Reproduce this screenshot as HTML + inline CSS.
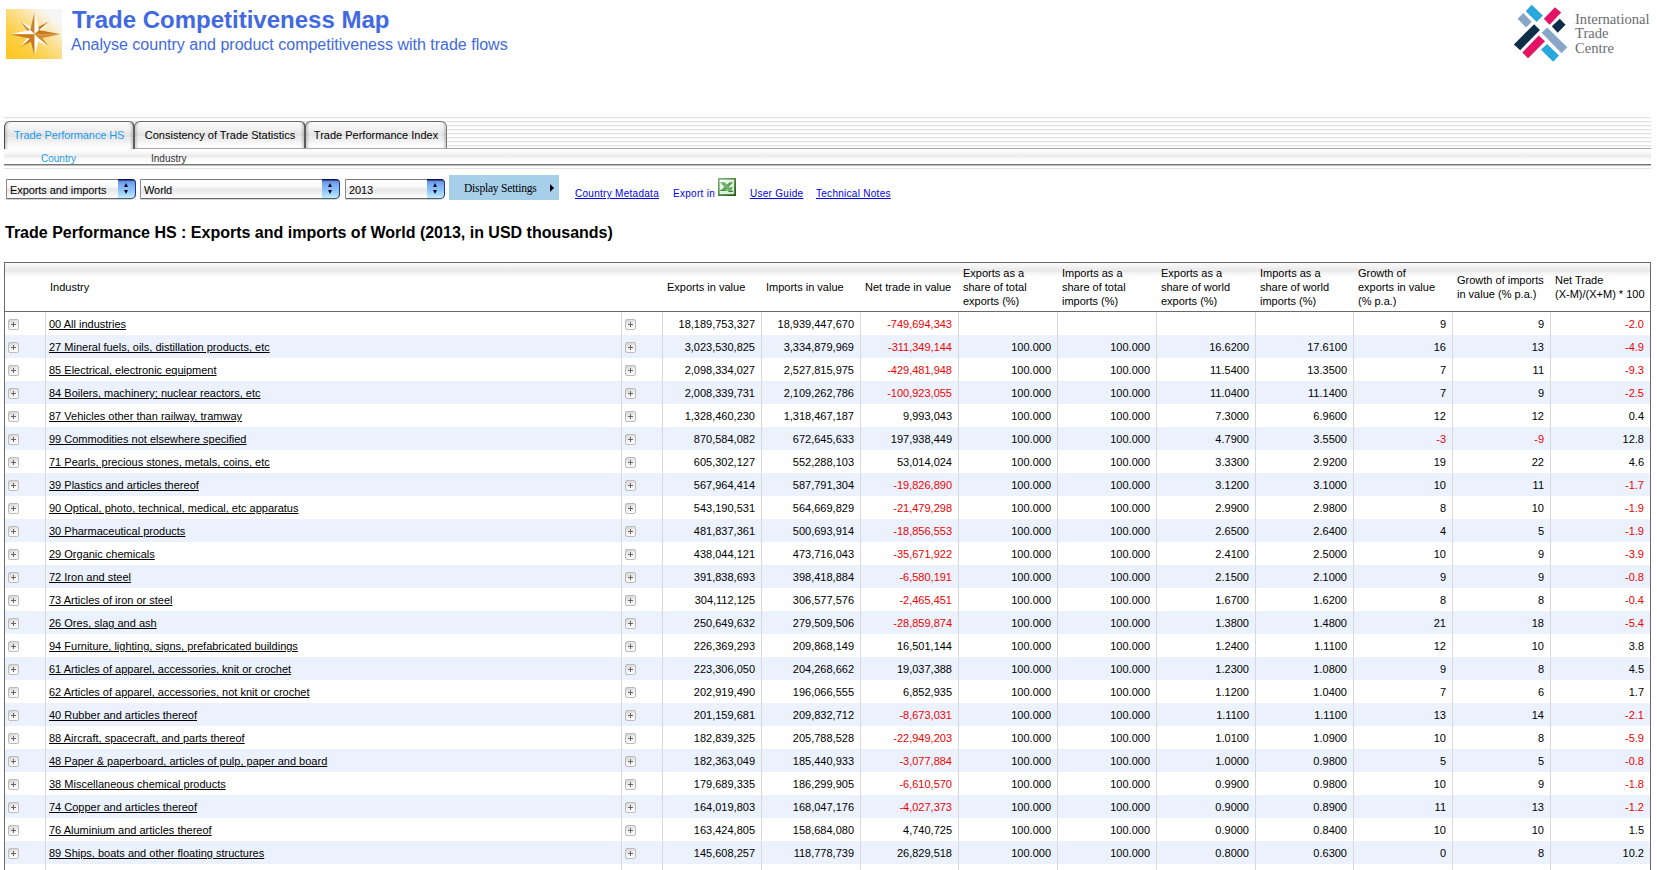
<!DOCTYPE html>
<html lang="en">
<head>
<meta charset="utf-8">
<title>Trade Competitiveness Map</title>
<style>
html,body{margin:0;padding:0;background:#fff;}
body{width:1657px;height:870px;overflow:hidden;position:relative;font-family:"Liberation Sans",Arial,sans-serif;font-size:11px;color:#000;}
.abs{position:absolute;}
#logo{left:6px;top:9px;width:56px;height:50px;}
#title{left:72px;top:6px;font-size:24px;font-weight:bold;color:#4169e1;white-space:nowrap;line-height:28px;}
#subtitle{left:71px;top:35px;font-size:16px;color:#4169e1;white-space:nowrap;line-height:20px;}
#itc{left:1497px;top:0;width:160px;height:80px;}
.itct{position:absolute;left:1575px;font-family:"Liberation Serif","Times New Roman",serif;font-size:14.6px;line-height:16px;color:#6b6d70;white-space:nowrap;}
#stripes{left:4px;top:117px;width:1647px;height:31px;background:repeating-linear-gradient(to bottom,#e3e3e3 0,#e3e3e3 1px,#f4f4f4 1px,#f4f4f4 2px,#fff 2px,#fff 4px);}
#tabline{left:4px;top:148px;width:1647px;height:1px;background:#a8a8a8;}
#subbar{left:4px;top:149px;width:1647px;height:15px;background:linear-gradient(to bottom,#fff 0,#fafafa 20%,#ebebeb 50%,#f4f4f4 56%,#fff 80%,#fff 100%);}
#subline{left:4px;top:164px;width:1647px;height:2px;background:linear-gradient(to bottom,#777 0,#777 1px,#bdbdbd 1px,#bdbdbd 2px);}
#subline2{left:4px;top:168px;width:1647px;height:1px;background:#e4e4e4;}
.tab{position:absolute;top:121px;height:27px;box-sizing:border-box;border:1px solid #6a6a6a;border-right:2px solid #5c5c5c;border-bottom:none;border-radius:6px 6px 0 0;background:linear-gradient(to bottom,#fcfcfc 0,#f2f2f2 25%,#e3e3e3 50%,#e0e0e0 54%,#f2f2f2 57%,#eaeaea 62%,#fafafa 85%,#fff 100%);text-align:center;line-height:26px;font-size:11px;white-space:nowrap;box-shadow:inset 3px 0 2px -1px rgba(0,0,0,.16),inset -3px 0 2px -1px rgba(0,0,0,.16),inset 0 1px 0 #fff;}
.tab.sel{height:28px;color:#1e9bef;border-left-color:#484848;letter-spacing:-0.1px;z-index:3;}
.sub{position:absolute;top:153px;font-size:10px;line-height:12px;white-space:nowrap;color:#333;}
.sel2{position:absolute;top:179px;height:20px;box-sizing:border-box;border:1px solid #8c8c8c;border-top-color:#7a7a7a;border-bottom-color:#666;border-radius:0 5px 5px 0;background:linear-gradient(to bottom,#fff 0,#fafafa 35%,#e6e6e6 55%,#f1f1f1 75%,#fff 100%);font-size:11px;letter-spacing:-0.08px;line-height:20px;padding-left:3px;white-space:nowrap;box-shadow:0 1px 0 #d4d4d4;}
.sel2 .cap{position:absolute;right:-1px;top:-1px;width:18px;height:20px;box-sizing:border-box;border-top:1px solid #0c1556;border-right:1px solid #22357c;border-bottom:1px solid #466068;border-radius:0 4px 5px 0;background:linear-gradient(to bottom,#1d2f80 0,#6a98e6 9%,#7fb0f1 30%,#8cc2f6 55%,#a8d8fa 80%,#c6eefd 100%);}
.sel2 .cap:before{content:"";position:absolute;left:6px;top:3px;border:2.4px solid transparent;border-top:none;border-bottom:4px solid #06082a;}
.sel2 .cap:after{content:"";position:absolute;left:6px;top:10px;border:2.4px solid transparent;border-bottom:none;border-top:4px solid #06082a;}
#disp{left:449px;top:175px;width:110px;height:25px;background:#a8cfe9;font-family:"Liberation Serif","Times New Roman",serif;font-size:11.5px;letter-spacing:-0.2px;line-height:25px;white-space:nowrap;}
#disp span{position:absolute;left:15px;top:1px;}
#disp:after{content:"";position:absolute;left:101px;top:9.3px;border:4px solid transparent;border-right:none;border-left:4.6px solid #000;}
.lnk{position:absolute;top:187px;font-size:10px;letter-spacing:0.28px;line-height:13px;color:#0000f0;white-space:nowrap;}
.lnk.u{text-decoration:underline;}
#xl{left:718px;top:178px;width:18px;height:18px;}
#h1{left:5px;top:223px;font-size:16px;font-weight:bold;line-height:20px;white-space:nowrap;color:#000;}
#grid{left:4px;top:262px;width:1647px;border-collapse:separate;border-spacing:0;table-layout:fixed;border:1px solid #6a6a6a;border-bottom:none;font-size:11px;}
#grid th{height:49px;padding:0 0 0 5px;text-align:left;font-weight:normal;vertical-align:middle;line-height:14px;border-bottom:1px solid #6a6a6a;background:linear-gradient(to bottom,#fbfbfb 0,#f1f1f1 4px,#e8e8e8 8px,#f2f2f2 9.5px,#fff 14px);box-sizing:border-box;}
#grid td{height:23px;padding:2px 0 0 0;box-sizing:border-box;white-space:nowrap;overflow:hidden;line-height:21px;border-left:1px solid #d9d9d9;}
#grid td.pl{border-left:none;}
#grid tr.alt td{background:#ecf2fd;}
#grid td.n{text-align:right;padding-right:6px;}
#grid td.neg{color:#f00000;}
#grid td.nm{padding-left:3px;}
#grid td.nm a{text-decoration:underline;color:#000;}
.plus{display:block;width:9px;height:9px;border:1px solid #bcbcbc;border-radius:2px;margin-left:3px;position:relative;background:linear-gradient(160deg,#d2d2d2 0,#f0f0f0 50%,#fff 100%);}
.plus:before{content:"";position:absolute;left:2px;top:4px;width:5px;height:1px;background:#666;}
.plus:after{content:"";position:absolute;left:4px;top:2px;width:1px;height:5px;background:#666;}

</style>
</head>
<body>
<svg id="logo" class="abs" viewBox="0 0 56 50">
<defs>
<linearGradient id="lg" x1="0" y1="1" x2="1" y2="0">
<stop offset="0" stop-color="#fdc41a"/><stop offset="0.3" stop-color="#fcce42"/><stop offset="0.6" stop-color="#fbe29a"/><stop offset="0.78" stop-color="#f8f2e4"/><stop offset="0.86" stop-color="#f5f7f6"/><stop offset="1" stop-color="#f4f7f7"/>
</linearGradient>
</defs>
<rect width="56" height="50" fill="url(#lg)"/>
<g transform="translate(28.6,25.3)">
<polygon points="0,0 -14,-12.8 -3.2,-7" fill="#fff"/><polygon points="0,0 -14,-12.8 -7,-3.2" fill="#cc8024"/>
<polygon points="0,0 14.6,-13 3.2,-7" fill="#c97a1e"/><polygon points="0,0 14.6,-13 7,-3.2" fill="#fff"/>
<polygon points="0,0 14.4,12.4 3.2,7" fill="#fff"/><polygon points="0,0 14.4,12.4 7,3.2" fill="#c97a1e"/>
<polygon points="0,0 -14,12.6 -3.2,7" fill="#c97a1e"/><polygon points="0,0 -14,12.6 -7,3.2" fill="#fff"/>
<polygon points="0,-22.3 -4.4,-4.4 0,0" fill="#cb8127"/><polygon points="0,-22.3 4.4,-4.4 0,0" fill="#fff"/>
<polygon points="0,22 -4.4,4.4 0,0" fill="#c97a1e"/><polygon points="0,22 4.4,4.4 0,0" fill="#fff"/>
<polygon points="-24.6,0 -4.4,-4.4 0,0" fill="#fff"/><polygon points="-24.6,0 -4.4,4.4 0,0" fill="#c97a1e"/>
<polygon points="25.8,0 4.4,-4.4 0,0" fill="#c97a1e"/><polygon points="25.8,0 4.4,4.4 0,0" fill="#d28d35"/>
</g>
</svg>
<div id="title" class="abs">Trade Competitiveness Map</div>
<div id="subtitle" class="abs">Analyse country and product competitiveness with trade flows</div>
<svg id="itc" class="abs" viewBox="0 0 1657 828">
<polygon points="358,50 475,160 410,228 298,115" fill="#2aa7dc"/>
<polygon points="600,75 665,130 545,255 485,195" fill="#e31463"/>
<polygon points="272,135 360,225 300,285 213,195" fill="#88a7c8"/>
<polygon points="650,195 710,255 628,340 568,272" fill="#0d2d48"/>
<polygon points="385,250 445,310 240,520 175,460" fill="#0d2d48"/>
<polygon points="520,285 728,490 668,550 462,340" fill="#88a7c8"/>
<polygon points="432,368 497,428 322,603 262,543" fill="#e31463"/>
<polygon points="518,455 642,575 582,640 455,515" fill="#2aa7dc"/>
</svg>
<div class="itct" style="top:11px">International</div><div class="itct" style="top:25px">Trade</div><div class="itct" style="top:40px">Centre</div>
<div id="stripes" class="abs"></div>
<div id="tabline" class="abs"></div>
<div id="subbar" class="abs"></div>
<div id="subline" class="abs"></div>
<div id="subline2" class="abs"></div>
<div class="tab sel" style="left:4px;width:131px;">Trade Performance HS</div>
<div class="tab" style="left:134px;width:172px;z-index:2;padding-left:1px;">Consistency of Trade Statistics</div>
<div class="tab" style="left:305px;width:142px;z-index:1;border-right:1px solid #777;">Trade Performance Index</div>
<div class="sub" style="left:41px;color:#1c9be6;">Country</div>
<div class="sub" style="left:151px;">Industry</div>
<div class="sel2" style="left:6px;width:130px;">Exports and imports<span class="cap"></span></div>
<div class="sel2" style="left:140px;width:200px;">World<span class="cap"></span></div>
<div class="sel2" style="left:345px;width:100px;">2013<span class="cap"></span></div>
<div id="disp" class="abs"><span>Display Settings</span></div>
<div class="lnk u" style="left:575px;">Country Metadata</div>
<div class="lnk" style="left:673px;">Export in</div>
<svg id="xl" class="abs" viewBox="0 0 18 18">
<defs><linearGradient id="xg" x1="0" y1="0" x2="1" y2="1"><stop offset="0" stop-color="#86b47e"/><stop offset="0.5" stop-color="#4c8a3f"/><stop offset="1" stop-color="#245216"/></linearGradient>
<linearGradient id="xf" x1="0" y1="0" x2="1" y2="1"><stop offset="0" stop-color="#f4faf3"/><stop offset="1" stop-color="#d4e6d0"/></linearGradient></defs>
<rect x="0" y="0" width="18" height="18" fill="url(#xg)"/>
<rect x="1.6" y="1.6" width="14.6" height="14.6" fill="url(#xf)"/>
<polygon points="12.2,9.4 15.4,9.4 12.4,11.4 15.6,14 10.8,14 9.6,12.6" fill="#3c8438"/>
<polygon points="11.6,4.2 15.2,4.2 6.8,13 2,13" fill="#58a354"/>
<polygon points="2,4.2 6.8,4.2 14.8,13 10.2,13" fill="#6db368"/>
<polygon points="2,12.2 8.6,12.2 9.2,13 2,13" fill="#3f8a3a"/>
</svg>
<div class="lnk u" style="left:750px;">User Guide</div>
<div class="lnk u" style="left:816px;">Technical Notes</div>
<div id="h1" class="abs">Trade Performance HS : Exports and imports of World (2013, in USD thousands)</div>
<table id="grid" class="abs">
<colgroup><col style="width:40px"><col style="width:576px"><col style="width:41px"><col style="width:99px"><col style="width:99px"><col style="width:98px"><col style="width:99px"><col style="width:99px"><col style="width:99px"><col style="width:98px"><col style="width:99px"><col style="width:98px"><col></colgroup>
<thead><tr>
<th></th><th>Industry</th><th></th>
<th>Exports in value</th><th>Imports in value</th><th>Net trade in value</th>
<th>Exports as a<br>share of total<br>exports (%)</th><th>Imports as a<br>share of total<br>imports (%)</th>
<th>Exports as a<br>share of world<br>exports (%)</th><th>Imports as a<br>share of world<br>imports (%)</th>
<th>Growth of<br>exports in value<br>(% p.a.)</th><th>Growth of imports<br>in value (% p.a.)</th><th>Net Trade<br>(X-M)/(X+M) * 100</th>
</tr></thead>
<tbody>
<tr><td class="pl"><i class="plus"></i></td><td class="nm"><a>00 All industries</a></td><td class="pl2"><i class="plus"></i></td><td class="n">18,189,753,327</td><td class="n">18,939,447,670</td><td class="n neg">-749,694,343</td><td class="n"></td><td class="n"></td><td class="n"></td><td class="n"></td><td class="n">9</td><td class="n">9</td><td class="n neg">-2.0</td></tr>
<tr class="alt"><td class="pl"><i class="plus"></i></td><td class="nm"><a>27 Mineral fuels, oils, distillation products, etc</a></td><td class="pl2"><i class="plus"></i></td><td class="n">3,023,530,825</td><td class="n">3,334,879,969</td><td class="n neg">-311,349,144</td><td class="n">100.000</td><td class="n">100.000</td><td class="n">16.6200</td><td class="n">17.6100</td><td class="n">16</td><td class="n">13</td><td class="n neg">-4.9</td></tr>
<tr><td class="pl"><i class="plus"></i></td><td class="nm"><a>85 Electrical, electronic equipment</a></td><td class="pl2"><i class="plus"></i></td><td class="n">2,098,334,027</td><td class="n">2,527,815,975</td><td class="n neg">-429,481,948</td><td class="n">100.000</td><td class="n">100.000</td><td class="n">11.5400</td><td class="n">13.3500</td><td class="n">7</td><td class="n">11</td><td class="n neg">-9.3</td></tr>
<tr class="alt"><td class="pl"><i class="plus"></i></td><td class="nm"><a>84 Boilers, machinery; nuclear reactors, etc</a></td><td class="pl2"><i class="plus"></i></td><td class="n">2,008,339,731</td><td class="n">2,109,262,786</td><td class="n neg">-100,923,055</td><td class="n">100.000</td><td class="n">100.000</td><td class="n">11.0400</td><td class="n">11.1400</td><td class="n">7</td><td class="n">9</td><td class="n neg">-2.5</td></tr>
<tr><td class="pl"><i class="plus"></i></td><td class="nm"><a>87 Vehicles other than railway, tramway</a></td><td class="pl2"><i class="plus"></i></td><td class="n">1,328,460,230</td><td class="n">1,318,467,187</td><td class="n">9,993,043</td><td class="n">100.000</td><td class="n">100.000</td><td class="n">7.3000</td><td class="n">6.9600</td><td class="n">12</td><td class="n">12</td><td class="n">0.4</td></tr>
<tr class="alt"><td class="pl"><i class="plus"></i></td><td class="nm"><a>99 Commodities not elsewhere specified</a></td><td class="pl2"><i class="plus"></i></td><td class="n">870,584,082</td><td class="n">672,645,633</td><td class="n">197,938,449</td><td class="n">100.000</td><td class="n">100.000</td><td class="n">4.7900</td><td class="n">3.5500</td><td class="n neg">-3</td><td class="n neg">-9</td><td class="n">12.8</td></tr>
<tr><td class="pl"><i class="plus"></i></td><td class="nm"><a>71 Pearls, precious stones, metals, coins, etc</a></td><td class="pl2"><i class="plus"></i></td><td class="n">605,302,127</td><td class="n">552,288,103</td><td class="n">53,014,024</td><td class="n">100.000</td><td class="n">100.000</td><td class="n">3.3300</td><td class="n">2.9200</td><td class="n">19</td><td class="n">22</td><td class="n">4.6</td></tr>
<tr class="alt"><td class="pl"><i class="plus"></i></td><td class="nm"><a>39 Plastics and articles thereof</a></td><td class="pl2"><i class="plus"></i></td><td class="n">567,964,414</td><td class="n">587,791,304</td><td class="n neg">-19,826,890</td><td class="n">100.000</td><td class="n">100.000</td><td class="n">3.1200</td><td class="n">3.1000</td><td class="n">10</td><td class="n">11</td><td class="n neg">-1.7</td></tr>
<tr><td class="pl"><i class="plus"></i></td><td class="nm"><a>90 Optical, photo, technical, medical, etc apparatus</a></td><td class="pl2"><i class="plus"></i></td><td class="n">543,190,531</td><td class="n">564,669,829</td><td class="n neg">-21,479,298</td><td class="n">100.000</td><td class="n">100.000</td><td class="n">2.9900</td><td class="n">2.9800</td><td class="n">8</td><td class="n">10</td><td class="n neg">-1.9</td></tr>
<tr class="alt"><td class="pl"><i class="plus"></i></td><td class="nm"><a>30 Pharmaceutical products</a></td><td class="pl2"><i class="plus"></i></td><td class="n">481,837,361</td><td class="n">500,693,914</td><td class="n neg">-18,856,553</td><td class="n">100.000</td><td class="n">100.000</td><td class="n">2.6500</td><td class="n">2.6400</td><td class="n">4</td><td class="n">5</td><td class="n neg">-1.9</td></tr>
<tr><td class="pl"><i class="plus"></i></td><td class="nm"><a>29 Organic chemicals</a></td><td class="pl2"><i class="plus"></i></td><td class="n">438,044,121</td><td class="n">473,716,043</td><td class="n neg">-35,671,922</td><td class="n">100.000</td><td class="n">100.000</td><td class="n">2.4100</td><td class="n">2.5000</td><td class="n">10</td><td class="n">9</td><td class="n neg">-3.9</td></tr>
<tr class="alt"><td class="pl"><i class="plus"></i></td><td class="nm"><a>72 Iron and steel</a></td><td class="pl2"><i class="plus"></i></td><td class="n">391,838,693</td><td class="n">398,418,884</td><td class="n neg">-6,580,191</td><td class="n">100.000</td><td class="n">100.000</td><td class="n">2.1500</td><td class="n">2.1000</td><td class="n">9</td><td class="n">9</td><td class="n neg">-0.8</td></tr>
<tr><td class="pl"><i class="plus"></i></td><td class="nm"><a>73 Articles of iron or steel</a></td><td class="pl2"><i class="plus"></i></td><td class="n">304,112,125</td><td class="n">306,577,576</td><td class="n neg">-2,465,451</td><td class="n">100.000</td><td class="n">100.000</td><td class="n">1.6700</td><td class="n">1.6200</td><td class="n">8</td><td class="n">8</td><td class="n neg">-0.4</td></tr>
<tr class="alt"><td class="pl"><i class="plus"></i></td><td class="nm"><a>26 Ores, slag and ash</a></td><td class="pl2"><i class="plus"></i></td><td class="n">250,649,632</td><td class="n">279,509,506</td><td class="n neg">-28,859,874</td><td class="n">100.000</td><td class="n">100.000</td><td class="n">1.3800</td><td class="n">1.4800</td><td class="n">21</td><td class="n">18</td><td class="n neg">-5.4</td></tr>
<tr><td class="pl"><i class="plus"></i></td><td class="nm"><a>94 Furniture, lighting, signs, prefabricated buildings</a></td><td class="pl2"><i class="plus"></i></td><td class="n">226,369,293</td><td class="n">209,868,149</td><td class="n">16,501,144</td><td class="n">100.000</td><td class="n">100.000</td><td class="n">1.2400</td><td class="n">1.1100</td><td class="n">12</td><td class="n">10</td><td class="n">3.8</td></tr>
<tr class="alt"><td class="pl"><i class="plus"></i></td><td class="nm"><a>61 Articles of apparel, accessories, knit or crochet</a></td><td class="pl2"><i class="plus"></i></td><td class="n">223,306,050</td><td class="n">204,268,662</td><td class="n">19,037,388</td><td class="n">100.000</td><td class="n">100.000</td><td class="n">1.2300</td><td class="n">1.0800</td><td class="n">9</td><td class="n">8</td><td class="n">4.5</td></tr>
<tr><td class="pl"><i class="plus"></i></td><td class="nm"><a>62 Articles of apparel, accessories, not knit or crochet</a></td><td class="pl2"><i class="plus"></i></td><td class="n">202,919,490</td><td class="n">196,066,555</td><td class="n">6,852,935</td><td class="n">100.000</td><td class="n">100.000</td><td class="n">1.1200</td><td class="n">1.0400</td><td class="n">7</td><td class="n">6</td><td class="n">1.7</td></tr>
<tr class="alt"><td class="pl"><i class="plus"></i></td><td class="nm"><a>40 Rubber and articles thereof</a></td><td class="pl2"><i class="plus"></i></td><td class="n">201,159,681</td><td class="n">209,832,712</td><td class="n neg">-8,673,031</td><td class="n">100.000</td><td class="n">100.000</td><td class="n">1.1100</td><td class="n">1.1100</td><td class="n">13</td><td class="n">14</td><td class="n neg">-2.1</td></tr>
<tr><td class="pl"><i class="plus"></i></td><td class="nm"><a>88 Aircraft, spacecraft, and parts thereof</a></td><td class="pl2"><i class="plus"></i></td><td class="n">182,839,325</td><td class="n">205,788,528</td><td class="n neg">-22,949,203</td><td class="n">100.000</td><td class="n">100.000</td><td class="n">1.0100</td><td class="n">1.0900</td><td class="n">10</td><td class="n">8</td><td class="n neg">-5.9</td></tr>
<tr class="alt"><td class="pl"><i class="plus"></i></td><td class="nm"><a>48 Paper &amp; paperboard, articles of pulp, paper and board</a></td><td class="pl2"><i class="plus"></i></td><td class="n">182,363,049</td><td class="n">185,440,933</td><td class="n neg">-3,077,884</td><td class="n">100.000</td><td class="n">100.000</td><td class="n">1.0000</td><td class="n">0.9800</td><td class="n">5</td><td class="n">5</td><td class="n neg">-0.8</td></tr>
<tr><td class="pl"><i class="plus"></i></td><td class="nm"><a>38 Miscellaneous chemical products</a></td><td class="pl2"><i class="plus"></i></td><td class="n">179,689,335</td><td class="n">186,299,905</td><td class="n neg">-6,610,570</td><td class="n">100.000</td><td class="n">100.000</td><td class="n">0.9900</td><td class="n">0.9800</td><td class="n">10</td><td class="n">9</td><td class="n neg">-1.8</td></tr>
<tr class="alt"><td class="pl"><i class="plus"></i></td><td class="nm"><a>74 Copper and articles thereof</a></td><td class="pl2"><i class="plus"></i></td><td class="n">164,019,803</td><td class="n">168,047,176</td><td class="n neg">-4,027,373</td><td class="n">100.000</td><td class="n">100.000</td><td class="n">0.9000</td><td class="n">0.8900</td><td class="n">11</td><td class="n">13</td><td class="n neg">-1.2</td></tr>
<tr><td class="pl"><i class="plus"></i></td><td class="nm"><a>76 Aluminium and articles thereof</a></td><td class="pl2"><i class="plus"></i></td><td class="n">163,424,805</td><td class="n">158,684,080</td><td class="n">4,740,725</td><td class="n">100.000</td><td class="n">100.000</td><td class="n">0.9000</td><td class="n">0.8400</td><td class="n">10</td><td class="n">10</td><td class="n">1.5</td></tr>
<tr class="alt"><td class="pl"><i class="plus"></i></td><td class="nm"><a>89 Ships, boats and other floating structures</a></td><td class="pl2"><i class="plus"></i></td><td class="n">145,608,257</td><td class="n">118,778,739</td><td class="n">26,829,518</td><td class="n">100.000</td><td class="n">100.000</td><td class="n">0.8000</td><td class="n">0.6300</td><td class="n">0</td><td class="n">8</td><td class="n">10.2</td></tr>
<tr><td class="pl"><i class="plus"></i></td><td class="nm"><a>44 Wood and articles of wood, wood charcoal</a></td><td class="pl2"><i class="plus"></i></td><td class="n">141,539,105</td><td class="n">144,316,382</td><td class="n neg">-2,777,277</td><td class="n">100.000</td><td class="n">100.000</td><td class="n">0.7800</td><td class="n">0.7600</td><td class="n">9</td><td class="n">8</td><td class="n neg">-1.0</td></tr></tbody>
</table>
</body>
</html>
